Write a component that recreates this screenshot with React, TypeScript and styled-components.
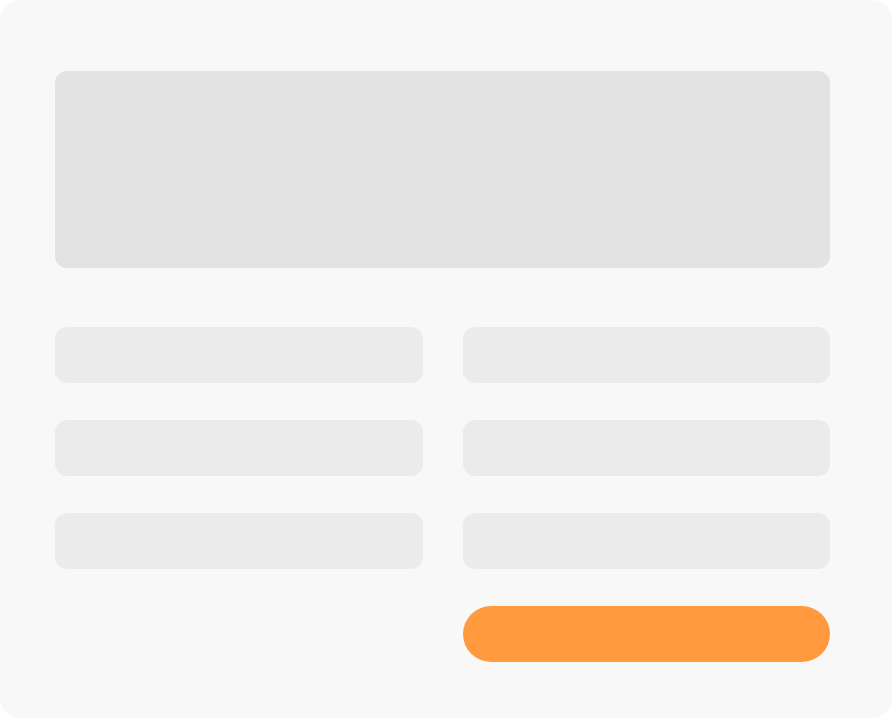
import React from "react";
import styled, { createGlobalStyle } from "styled-components";

const GlobalStyle = createGlobalStyle`
	html, body {
		margin: 0;
		padding: 0;
		background: #ffffff;
		font-family: "Liberation Sans", Arial, sans-serif;
	}
`;

const FIELD_HEIGHT = "56.5px";

const Card = styled.div`
	box-sizing: border-box;
	width: 892px;
	height: 718px;
	background: #f8f8f8;
	border-radius: 20px;
	padding: 71px 62px 0 55px;
`;

const Banner = styled.div`
	height: 197.3px;
	background: #e3e3e3;
	border-radius: 12px;
`;

const FormGrid = styled.div`
	display: grid;
	grid-template-columns: 367.5px 367.5px;
	column-gap: 40px;
	row-gap: 36.5px;
	margin-top: 58.5px;
`;

const Field = styled.div`
	height: ${FIELD_HEIGHT};
	background: #ebebeb;
	border-radius: 12px;
`;

const SubmitButton = styled.button`
	grid-column: 2;
	height: ${FIELD_HEIGHT};
	border: none;
	padding: 0;
	background: #ff9a3e;
	border-radius: 28px;
	cursor: pointer;
`;

const App = () => (
	<>
		<GlobalStyle />
		<Card>
			<Banner />
			<FormGrid>
				{Array.from({ length: 6 }).map((_, i) => (
					<Field key={i} />
				))}
				<SubmitButton aria-label="Submit" />
			</FormGrid>
		</Card>
	</>
);

export default App;
